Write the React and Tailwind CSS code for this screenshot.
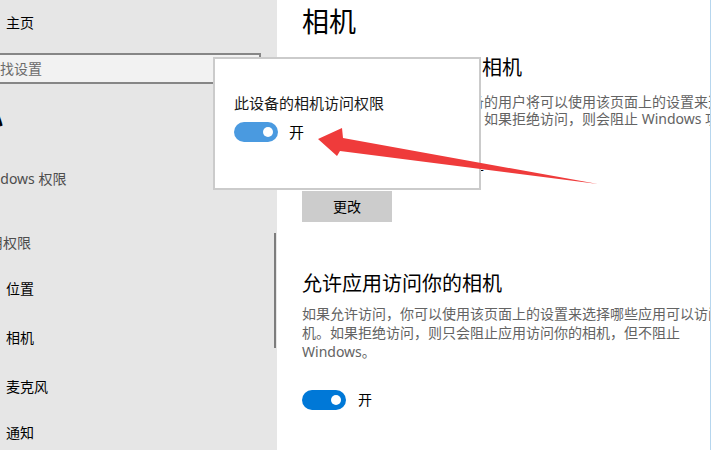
import { useState } from 'react';

const font = "font-['Noto_Sans','Noto_Sans_CJK_SC',sans-serif]";

function Toggle({ on, color }) {
    return (
        <div className={`w-[44px] h-[20px] rounded-full flex items-center ${color} ${on ? 'justify-end' : 'justify-start'} px-[5px]`}>
            <div className="w-[10px] h-[10px] rounded-full bg-white" />
        </div>
    );
}

function Sidebar() {
    return (
        <div className="relative w-[277px] shrink-0 bg-[#e6e6e6] overflow-hidden">
            <div className="h-[44px] flex items-center pl-[6px] text-[14px] text-black">主页</div>
            <div className="mt-[9px] -ml-[24px] w-[285px] h-[31px] border-2 border-[#868686] bg-[#f2f2f2] flex items-center pl-[8px] text-[14px] text-[#6b6b6b] whitespace-nowrap">
                查找设置
            </div>
            <div className="mt-[22px] -ml-[37px] h-[24px] leading-[24px] text-[20px] font-semibold text-black whitespace-nowrap">隐私</div>
            <div className="mt-[39px] -ml-[25px] h-[20px] leading-[20px] text-[14px] text-[#4d4d4d] whitespace-nowrap">Windows 权限</div>
            <div className="mt-[44px] -ml-[25px] h-[20px] leading-[20px] text-[14px] text-[#4d4d4d] whitespace-nowrap">应用权限</div>
            <div className="mt-[26px] pl-[6px] h-[20px] leading-[20px] text-[14px] text-black">位置</div>
            <div className="mt-[29px] pl-[6px] h-[20px] leading-[20px] text-[14px] text-black">相机</div>
            <div className="mt-[29px] pl-[6px] h-[20px] leading-[20px] text-[14px] text-black">麦克风</div>
            <div className="mt-[26px] pl-[6px] h-[20px] leading-[20px] text-[14px] text-black">通知</div>
            {/* scrollbar thumb */}
            <div className="absolute left-[274px] top-[233px] w-[2px] h-[115px] bg-[#7d7d7d]" />
        </div>
    );
}

function CameraPage({ appsOn }) {
    return (
        <div className="w-[433px] shrink-0 overflow-hidden pl-[25px] bg-white">
            <div className="h-[44px] flex items-center text-[27px] text-black">相机</div>
            <div className="mt-[10px] leading-[28px] text-[20px] text-black whitespace-nowrap">允许访问此设备上的相机</div>
            <div className="mt-[11px] text-[14px] leading-[17px] text-[#636363] whitespace-nowrap">
                <div>如果允许访问，则使用此设备的用户将可以使用该页面上的设置来选择其</div>
                <div>应用是否具有相机访问权限。如果拒绝访问，则会阻止 Windows 功能、Microsoft Store</div>
            </div>
            <div className="mt-[34px] leading-[20px] text-[14px] text-black whitespace-nowrap">此设备的相机访问权限已打开</div>
            <button className="mt-[10px] w-[90px] h-[31px] bg-[#cccccc] text-[14px] text-black flex items-center justify-center">
                更改
            </button>
            <div className="mt-[48px] leading-[28px] text-[20px] text-black whitespace-nowrap">允许应用访问你的相机</div>
            <div className="mt-[6px] text-[14px] leading-[19px] text-[#636363] whitespace-nowrap">
                <div>如果允许访问，你可以使用该页面上的设置来选择哪些应用可以访问你的相</div>
                <div>机。如果拒绝访问，则只会阻止应用访问你的相机，但不阻止</div>
                <div>Windows。</div>
            </div>
            <div className="mt-[29px] flex items-center gap-[12px]">
                <Toggle on={appsOn} color="bg-[#0078d7]" />
                <span className="text-[14px] text-black leading-[20px]">开</span>
            </div>
        </div>
    );
}

function AccessPopup({ on }) {
    return (
        <div className="absolute left-[213px] top-[57px] w-[268px] h-[133px] bg-white border-2 border-[#cbcbcb] pl-[19px] pt-[34px]">
            <div className="leading-[20px] text-[15px] text-[#1a1a1a] whitespace-nowrap">此设备的相机访问权限</div>
            <div className="mt-[9px] flex items-center gap-[11px]">
                <Toggle on={on} color="bg-[#4a9ae0]" />
                <span className="text-[15px] text-black leading-[20px]">开</span>
            </div>
        </div>
    );
}

export default function App() {
    const [deviceOn] = useState(true);
    const [appsOn] = useState(true);

    return (
        <div className={`relative w-[712px] h-[450px] overflow-hidden flex bg-white ${font}`}>
            <Sidebar />
            <CameraPage appsOn={appsOn} />
            <div className="w-px shrink-0 bg-[#b6d6ee]" />
            <div className="flex-1 bg-white" />

            <AccessPopup on={deviceOn} />

            {/* red callout arrow */}
            <svg className="absolute inset-0 pointer-events-none" width="712" height="450" viewBox="0 0 712 450">
                <polygon
                    points="318,139 342,128 343,138 598,184 340,151 337,156"
                    fill="#ef3b3b"
                />
            </svg>
        </div>
    );
}
